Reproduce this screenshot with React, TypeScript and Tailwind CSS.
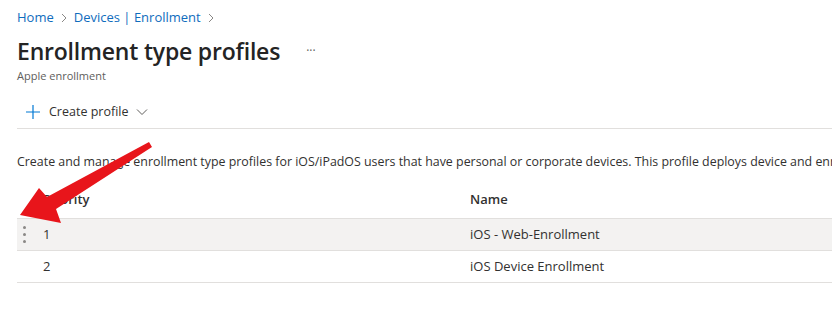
import React from "react";

const font = { fontFamily: '"Segoe UI", "Open Sans", "Noto Sans", sans-serif' };

export default function App() {
  return (
    <div className="relative w-[832px] h-[329px] overflow-hidden bg-white text-[#323130]" style={font}>
      <div className="pl-[17px] pt-[9px]">
        <div className="flex items-center gap-[6px] text-[13px] text-[#0f6cbd] h-[18px]">
          <span>Home</span>
          <svg width="8" height="10" viewBox="0 0 8 10" className="text-[#8a8886]"><path d="M2 1l4 4-4 4" fill="none" stroke="currentColor" strokeWidth="1" /></svg>
          <span>Devices | Enrollment</span>
          <svg width="8" height="10" viewBox="0 0 8 10" className="text-[#8a8886]"><path d="M2 1l4 4-4 4" fill="none" stroke="currentColor" strokeWidth="1" /></svg>
        </div>
        <div className="flex items-center mt-[8px] h-[32px]">
          <h1 className="text-[23px] font-semibold leading-[32px] tracking-[-0.2px] text-[#242424]">Enrollment type profiles</h1>
          <span className="ml-[26px] text-[12px] text-[#605e5c]">···</span>
        </div>
        <div className="text-[11px] text-[#605e5c] leading-[14px] mt-[2px]">Apple enrollment</div>
      </div>
      <div className="ml-[17px] mt-[20px] h-[26px] border-b border-[#e1dfdd] flex items-start">
        <div className="flex items-center h-[18px] pl-[8px]">
          <svg width="16" height="16" viewBox="0 0 16 16" className="text-[#0078d4]"><path d="M8 1v14M1 8h14" stroke="currentColor" strokeWidth="1.2" /></svg>
          <span className="ml-[8px] text-[12.5px] text-[#323130]">Create profile</span>
          <svg width="12" height="8" viewBox="0 0 12 8" className="ml-[8px] text-[#605e5c]"><path d="M1 1.5l5 5 5-5" fill="none" stroke="currentColor" strokeWidth="1" /></svg>
        </div>
      </div>
      <div className="ml-[17px] mt-[24px] text-[12.4px] whitespace-nowrap text-[#323130] leading-[18px]">
        Create and manage enrollment type profiles for iOS/iPadOS users that have personal or corporate devices. This profile deploys device and enrollment settings.
      </div>
      <div className="ml-[17px] mt-[10px]">
        <div className="flex h-[38px] items-center text-[13px] font-semibold text-[#323130] border-b border-[#e1dfdd]">
          <div className="w-[453px] pl-[26px]">Priority</div>
          <div>Name</div>
        </div>
        <div className="flex h-[32px] items-center text-[13px] bg-[#f3f2f1] border-b border-[#e1dfdd]">
          <div className="w-[453px] flex items-center">
            <div className="w-[26px] flex justify-start pl-[6px]">
              <div className="flex flex-col gap-[4px]">
                <span className="block w-[3px] h-[3px] rounded-full bg-[#8a8886]" />
                <span className="block w-[3px] h-[3px] rounded-full bg-[#8a8886]" />
                <span className="block w-[3px] h-[3px] rounded-full bg-[#8a8886]" />
              </div>
            </div>
            <span>1</span>
          </div>
          <div>iOS - Web-Enrollment</div>
        </div>
        <div className="flex h-[32px] items-center text-[13px] border-b border-[#e1dfdd]">
          <div className="w-[453px] pl-[26px]">2</div>
          <div>iOS Device Enrollment</div>
        </div>
      </div>
      <svg className="absolute left-0 top-0 pointer-events-none" width="832" height="329" viewBox="0 0 832 329">
        <polygon points="20,215 39,188 47,197 149,142 152,147 56,209 61,223" fill="#e8151b" />
      </svg>
    </div>
  );
}
